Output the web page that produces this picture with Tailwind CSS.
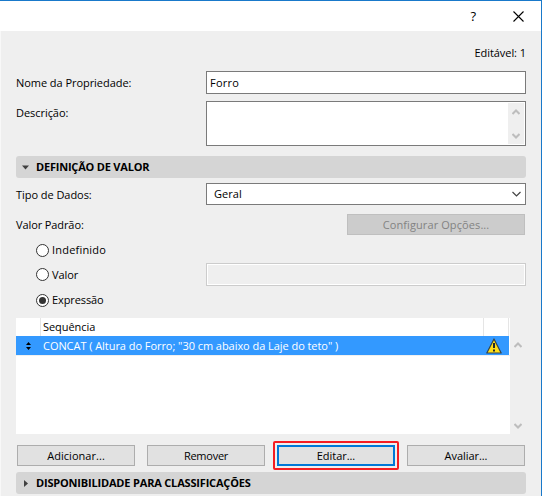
<!DOCTYPE html>
<html lang="pt">
<head>
<meta charset="utf-8">
<title>Propriedade</title>
<script src="https://cdn.jsdelivr.net/npm/@tailwindcss/browser@4"></script>
</head>
<body class="m-0 overflow-hidden">
<div class="flex h-[496px] w-[542px] flex-col overflow-hidden border-t border-r border-[#1979ca] bg-[#efefef] font-['Open_Sans','Noto_Sans',sans-serif] text-[11px] leading-[16px] tracking-[-0.05px] whitespace-nowrap text-black">
  <header class="flex h-[30px] shrink-0 items-center justify-end bg-white pr-[17px]">
    <span class="mr-[37px] text-[13px] font-medium tracking-normal">?</span>
    <svg class="size-[11px]" viewBox="0 0 11 11" fill="none" stroke="#000" stroke-width="1.1"><path d="M.5.5l10 10M10.5.5l-10 10"/></svg>
  </header>
  <main class="flex grow flex-col border-l border-[#f8f8f8] pr-[15px] pl-[15px]">
    <div class="mt-[14px] flex h-4 justify-end"><span>Editável: 1</span></div>
    <div class="mt-[10px] flex h-[23px] items-center">
      <label class="w-[190px] pt-px">Nome da Propriedade:</label>
      <div class="flex h-full grow items-center border border-[#7a7a7a] bg-white px-[3px] pt-px tracking-[0.25px]">Forro</div>
    </div>
    <div class="mt-[7px] flex h-[45px]">
      <label class="w-[190px] pt-[4px]">Descrição:</label>
      <div class="flex grow justify-end border border-[#7a7a7a] bg-white p-px">
        <div class="flex w-4 flex-col items-center justify-between bg-[#efefef] pt-[6px] pb-[5px]">
          <svg class="h-[6px] w-[8px]" viewBox="0 0 8 6" fill="none" stroke="#bdbdbd" stroke-width="2"><path d="M.5 5L4 1.5 7.5 5"/></svg>
          <svg class="h-[6px] w-[8px]" viewBox="0 0 8 6" fill="none" stroke="#bdbdbd" stroke-width="2"><path d="M.5 1L4 4.5 7.5 1"/></svg>
        </div>
      </div>
    </div>
    <div class="mt-[10px] flex h-[22px] shrink-0 items-center rounded-[3px] bg-[#d5d5d5] pl-[6px] font-bold tracking-[-0.2px]">
      <svg class="mr-[7px] h-[5px] w-[7px]" viewBox="0 0 7 5" fill="#404040"><path d="M0 .5h7L3.5 4.5z"/></svg>
      <span>DEFINIÇÃO DE VALOR</span>
    </div>
    <div class="mt-[5px] flex h-[22px] items-center">
      <label class="w-[190px] pt-px">Tipo de Dados:</label>
      <div class="flex h-full grow items-center justify-between border border-[#7a7a7a] bg-white pr-[4px] pl-[7px]">
        <span class="tracking-[0.05px]">Geral</span>
        <svg class="h-[6px] w-[9px]" viewBox="0 0 9 6" fill="none" stroke="#444" stroke-width="1.2"><path d="M.5 1l4 4 4-4"/></svg>
      </div>
    </div>
    <div class="mt-[9px] flex h-[21px] items-center justify-between">
      <label class="pt-px tracking-[-0.1px]">Valor Padrão:</label>
      <button class="mr-px h-[21px] w-[178px] border border-[#bfbfbf] bg-[#cccccc] pt-px tracking-[0.1px] text-[#838383]">Configurar Opções...</button>
    </div>
    <div class="mt-[7px] flex h-4 items-center pl-5">
      <span class="mr-[3px] size-[13px] rounded-full border border-[#333] bg-white"></span><span class="tracking-[0.2px]">Indefinido</span>
    </div>
    <div class="mt-[5px] flex h-[23px] items-center">
      <div class="flex w-[190px] items-center pl-5"><span class="mr-[3px] size-[13px] rounded-full border border-[#333] bg-white"></span><span>Valor</span></div>
      <div class="h-full grow border border-[#cccccc] shadow-[inset_0_0_0_1px_#fff]"></div>
    </div>
    <div class="mt-[6px] flex h-4 items-center pl-5">
      <span class="mr-[3px] flex size-[13px] items-center justify-center rounded-full border border-[#333] bg-white"><span class="size-[7px] rounded-full bg-[#333]"></span></span><span class="tracking-[-0.1px]">Expressão</span>
    </div>
    <div class="mt-[10px] flex h-[116px] shrink-0">
      <div class="w-[494px] bg-white">
        <div class="flex h-[18px] w-[493px] items-center border-r border-[#e5e5e5]">
          <span class="h-full w-[25px] border-r border-[#e5e5e5]"></span>
          <span class="flex h-full w-[443px] items-center border-r border-[#e5e5e5] pl-[2px]">Sequência</span>
        </div>
        <div class="flex h-[19px] w-[493px] items-center bg-[#3399ff] text-white">
          <svg class="mr-[12px] ml-[10px] h-[8px] w-[5px]" viewBox="0 0 5 8" fill="#000"><path d="M0 3L2.5 0 5 3zM0 5h5L2.5 8z"/></svg>
          <span>CONCAT ( Altura do Forro; "30 cm abaixo da Laje do teto" )</span>
          <svg class="mr-[7px] ml-auto h-4 w-4" viewBox="0 0 16 16"><path d="M8 1L15.2 15H.8z" fill="#ffdf16" stroke="#34434c" stroke-width="1.2" stroke-linejoin="round"/><path d="M7 5h2v5H7zM7 11.5h2v2H7z" fill="#202a30"/></svg>
        </div>
        <div class="h-px bg-[#f0f0f0]"></div>
      </div>
      <div class="flex w-[15px] flex-col items-center justify-between pt-[24px] pb-[5px]">
        <svg class="h-[6px] w-[8px]" viewBox="0 0 8 6" fill="none" stroke="#bdbdbd" stroke-width="2"><path d="M.5 5L4 1.5 7.5 5"/></svg>
        <svg class="h-[6px] w-[8px]" viewBox="0 0 8 6" fill="none" stroke="#bdbdbd" stroke-width="2"><path d="M.5 1L4 4.5 7.5 1"/></svg>
      </div>
    </div>
    <div class="mt-[11px] flex h-[21px] shrink-0 justify-between px-px tracking-[-0.05px]">
      <button class="w-[118px] border border-[#adadad] bg-[#e1e1e1] pt-px tracking-[0.05px]">Adicionar...</button>
      <button class="w-[118px] border border-[#adadad] bg-[#e1e1e1] pt-px tracking-[-0.25px]">Remover</button>
      <button class="relative w-[118px] border-2 border-[#0078d7] bg-[#e1e1e1] pt-px">Editar...<span class="absolute -inset-x-[6px] -inset-y-[6px] rounded-[2px] border-2 border-[#f51d22]"></span></button>
      <button class="w-[118px] border border-[#adadad] bg-[#e1e1e1] pt-px">Avaliar...</button>
    </div>
    <div class="mt-[6px] flex h-[22px] shrink-0 items-center rounded-[3px] bg-[#d5d5d5] pl-[8px] font-bold tracking-[-0.18px]">
      <svg class="mr-[8px] h-[7px] w-[4px]" viewBox="0 0 4 7" fill="#404040"><path d="M0 0v7L4 3.5z"/></svg>
      <span>DISPONIBILIDADE PARA CLASSIFICAÇÕES</span>
    </div>
  </main>
</div>
</body>
</html>
